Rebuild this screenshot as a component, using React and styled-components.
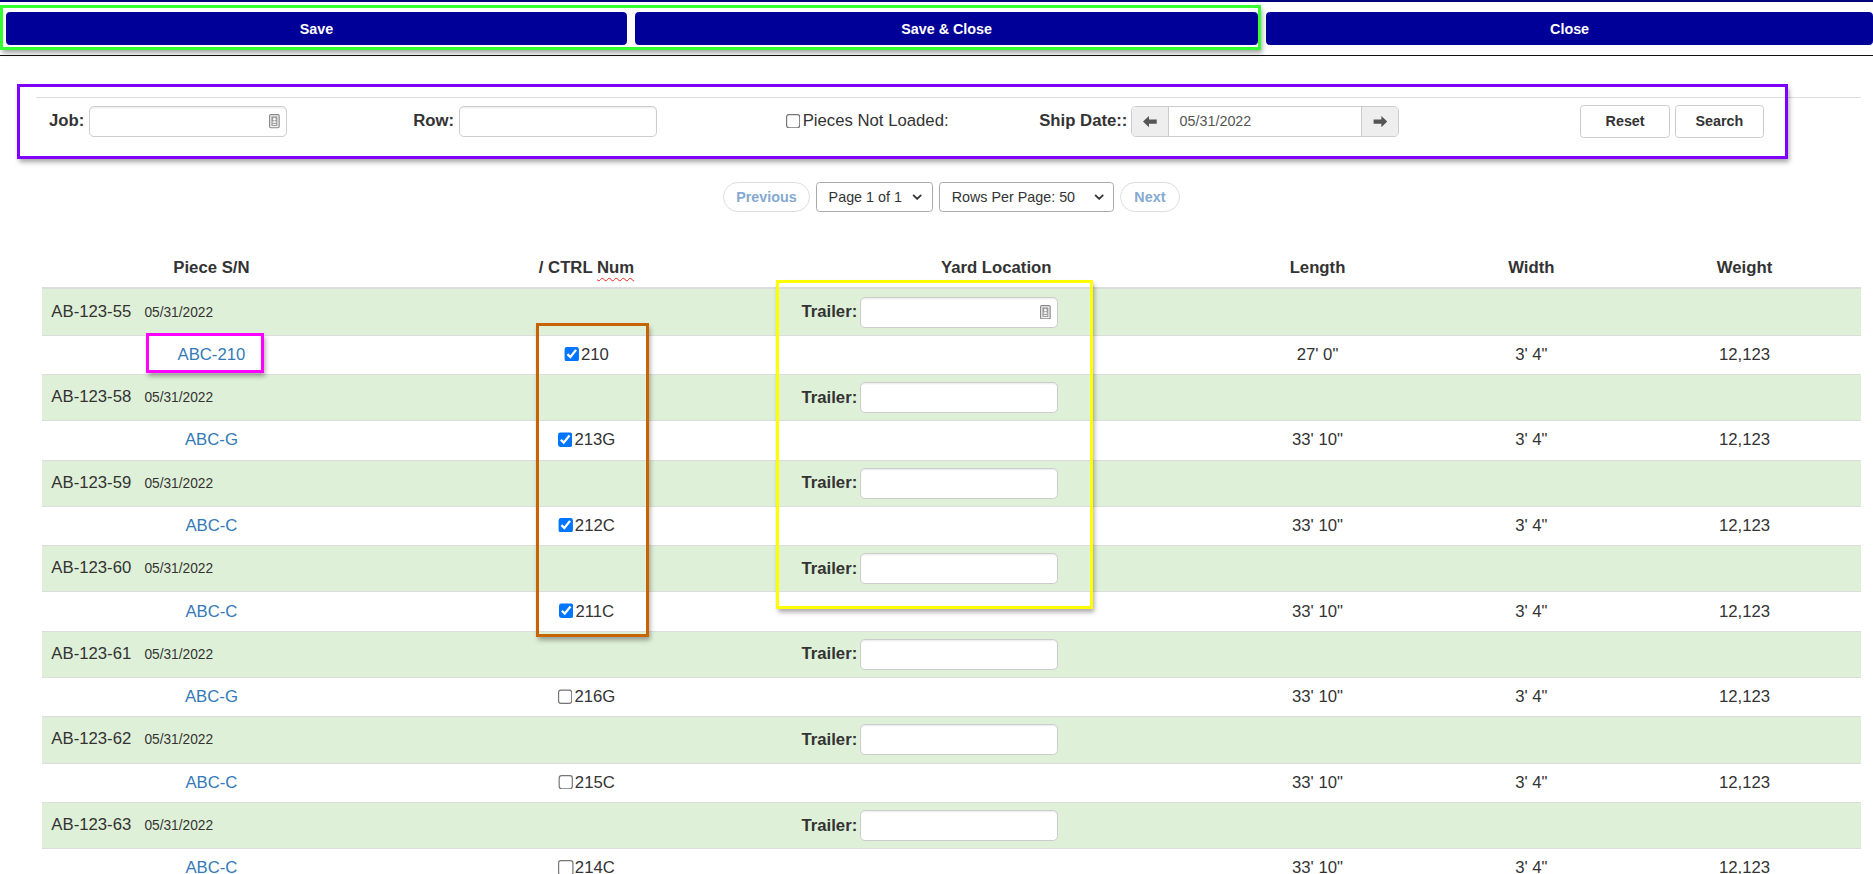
import React from 'react';
import styled, { createGlobalStyle } from 'styled-components';
import { ChevronDown } from 'lucide-react';

const GlobalStyle = createGlobalStyle`
  html, body {
    margin: 0;
    padding: 0;
    overflow: hidden;
    background: #fff;
  }
  body {
    font-family: "Liberation Sans", Arial, Helvetica, sans-serif;
    font-size: 14px;
    color: #333;
  }
  * {
    box-sizing: border-box;
  }
`;

const rows = [
  { job: 'AB-123-55', piece: 'ABC-210', ctrl: '210', checked: true, length: `27' 0"`, autofill: true },
  { job: 'AB-123-58', piece: 'ABC-G', ctrl: '213G', checked: true, length: `33' 10"` },
  { job: 'AB-123-59', piece: 'ABC-C', ctrl: '212C', checked: true, length: `33' 10"` },
  { job: 'AB-123-60', piece: 'ABC-C', ctrl: '211C', checked: true, length: `33' 10"` },
  { job: 'AB-123-61', piece: 'ABC-G', ctrl: '216G', checked: false, length: `33' 10"` },
  { job: 'AB-123-62', piece: 'ABC-C', ctrl: '215C', checked: false, length: `33' 10"` },
  { job: 'AB-123-63', piece: 'ABC-C', ctrl: '214C', checked: false, length: `33' 10"` },
];

// the screenshot was taken at 1568px wide, scale it up to the window
const Page = styled.div`
  position: relative;
  width: 1568px;
  height: 732px;
  overflow: hidden;
  zoom: 1.194515;
`;

const TopStrip = styled.div`
  height: 2px;
  background: #00007a;
`;

const ActionBar = styled.div`
  display: grid;
  grid-template-columns: 520px 521px 1fr;
  gap: 7px;
  padding: 8px 0 0 5px;
`;

const ActionButton = styled.button`
  height: 28px;
  border: 1px solid #000099;
  border-radius: 3px;
  background: #000099;
  color: #fff;
  font-family: inherit;
  font-size: 12px;
  font-weight: 700;
  cursor: pointer;
`;

const Rule = styled.div`
  margin-top: 8px;
  border-top: 1px solid #111;
`;

const FilterPanel = styled.div`
  margin: 34px 10px 0 30px;
  border-top: 1px solid #ddd;
`;

const FilterRow = styled.div`
  display: grid;
  grid-template-columns: 305px 312px 212px 453px auto;
  align-items: center;
  padding: 6px 0 0 11px;
`;

const Field = styled.div`
  display: flex;
  align-items: center;
  gap: ${(p) => p.$gap ?? 4}px;
`;

const Label = styled.label`
  font-weight: 700;
  font-size: 14px;
  color: #333;
  white-space: nowrap;
`;

const PlainLabel = styled.label`
  font-size: 14px;
  color: #333;
  white-space: nowrap;
`;

const InputWrap = styled.div`
  position: relative;
  width: ${(p) => p.$w || 166}px;
  height: 26px;
`;

const TextInput = styled.input`
  width: 100%;
  height: 100%;
  padding: 0 8px;
  border: 1px solid #ccc;
  border-radius: 4px;
  background: #fff;
  box-shadow: inset 0 1px 1px rgba(0, 0, 0, 0.075);
  font-family: inherit;
  font-size: 12px;
  color: #555;
  outline: none;
`;

const AutofillBadge = styled.span`
  position: absolute;
  right: 6px;
  top: 7px;
  display: flex;
  pointer-events: none;
`;

const Checkbox = styled.input.attrs({ type: 'checkbox' })`
  width: 13px;
  height: 13px;
  margin: 0 ${(p) => p.$space ?? 3}px 0 0;
  vertical-align: -2px;
  accent-color: #0075ff;
`;

const DateGroup = styled.div`
  display: flex;
  width: 224px;
  height: 26px;
  border: 1px solid #ccc;
  border-radius: 4px;
  overflow: hidden;
`;

const Addon = styled.span`
  display: flex;
  align-items: center;
  justify-content: center;
  width: 30px;
  background: #eee;
`;

const DateText = styled.span`
  flex: 1;
  display: flex;
  align-items: center;
  padding-left: 9px;
  border-left: 1px solid #ccc;
  border-right: 1px solid #ccc;
  background: #fff;
  font-size: 12px;
  color: #555;
`;

const ButtonGroup = styled.div`
  display: flex;
  gap: 4px;
`;

const PlainButton = styled.button`
  width: 75px;
  height: 28px;
  border: 1px solid #ccc;
  border-radius: 3px;
  background: #fff;
  color: #333;
  font-family: inherit;
  font-size: 12px;
  font-weight: 700;
`;

const Pager = styled.div`
  display: flex;
  justify-content: center;
  align-items: center;
  gap: 5px;
  margin-top: 37px;
  padding: 0 10px 0 35px;
`;

const PagerLink = styled.span`
  display: inline-flex;
  align-items: center;
  height: 25px;
  padding: 0 ${(p) => p.$pad || 10}px;
  border: 1px solid #ddd;
  border-radius: 13px;
  color: #86a9d0;
  font-size: 12px;
  font-weight: 700;
`;

const SelectBox = styled.div`
  display: flex;
  align-items: center;
  justify-content: space-between;
  width: ${(p) => p.$w}px;
  height: 25px;
  padding: 0 6px 0 10px;
  border: 1px solid #aaa;
  border-radius: 3px;
  font-size: 12px;
  color: #333;
`;

const Table = styled.table`
  width: 1523px;
  margin: 29px 0 0 35px;
  border-collapse: collapse;
  table-layout: fixed;
`;

const Th = styled.th`
  padding: 8px 8px 6px;
  line-height: 20px;
  font-size: 14px;
  font-weight: 700;
  text-align: center;
  color: #333;
  border-bottom: 2px solid #ddd;
`;

const Spelling = styled.span`
  text-decoration: underline wavy #e22;
  text-decoration-thickness: 1px;
  text-underline-offset: 3px;
`;

const Row = styled.tr`
  background: ${(p) => (p.$group ? '#dff0d8' : '#fff')};
`;

const Td = styled.td`
  padding: 6px 8px;
  line-height: 20px;
  border-top: 1px solid #ddd;
  text-align: ${(p) => p.$align || 'center'};
  vertical-align: middle;
  font-size: 14px;
  color: #333;
  white-space: nowrap;
`;

const ShipDate = styled.small`
  margin-left: 11px;
  font-size: 11.5px;
`;

const PieceLink = styled.a`
  color: #337ab7;
  text-decoration: none;
`;

const Callout = styled.div`
  position: absolute;
  left: ${(p) => p.$x}px;
  top: ${(p) => p.$y}px;
  width: ${(p) => p.$w}px;
  height: ${(p) => p.$h}px;
  border: 3px solid ${(p) => p.$color};
  box-shadow: 2px 3px 4px rgba(0, 0, 0, 0.35);
  pointer-events: none;
`;

const ContactIcon = () => (
  <svg width="9" height="12" viewBox="0 0 9 12">
    <rect x="0.5" y="0.5" width="8" height="11" rx="1" fill="#f4f4f4" stroke="#8a8a8a" />
    <rect x="2" y="2" width="5" height="8" fill="#9a9a9a" />
    <circle cx="4.5" cy="4.3" r="1.1" fill="#fff" />
    <path d="M2.8 7.4c0-1 0.8-1.6 1.7-1.6s1.7 0.6 1.7 1.6z" fill="#fff" />
    <rect x="3" y="8.3" width="3" height="0.8" fill="#fff" />
  </svg>
);

const Arrow = ({ dir }) => (
  <svg width="12" height="11" viewBox="0 0 12 11">
    <path
      d="M0 5.5L5 0.8V3.7H11.5V7.3H5V10.2Z"
      fill="#555"
      transform={dir === 'right' ? 'matrix(-1 0 0 1 12 0)' : undefined}
    />
  </svg>
);

const App = () => {
  return (
    <>
      <GlobalStyle />
      <Page>
        <TopStrip />
        <ActionBar>
          <ActionButton>Save</ActionButton>
          <ActionButton>Save &amp; Close</ActionButton>
          <ActionButton>Close</ActionButton>
        </ActionBar>
        <Rule />

        <FilterPanel>
          <FilterRow>
            <Field>
              <Label>Job:</Label>
              <InputWrap>
                <TextInput />
                <AutofillBadge><ContactIcon /></AutofillBadge>
              </InputWrap>
            </Field>
            <Field>
              <Label>Row:</Label>
              <InputWrap>
                <TextInput />
              </InputWrap>
            </Field>
            <Field $gap={0}>
              <Checkbox $space={1} />
              <PlainLabel>Pieces Not Loaded:</PlainLabel>
            </Field>
            <Field $gap={3}>
              <Label>Ship Date::</Label>
              <DateGroup>
                <Addon><Arrow dir="left" /></Addon>
                <DateText>05/31/2022</DateText>
                <Addon><Arrow dir="right" /></Addon>
              </DateGroup>
            </Field>
            <ButtonGroup>
              <PlainButton>Reset</PlainButton>
              <PlainButton>Search</PlainButton>
            </ButtonGroup>
          </FilterRow>
        </FilterPanel>

        <Pager>
          <PagerLink>Previous</PagerLink>
          <SelectBox $w={98}>
            Page 1 of 1
            <ChevronDown size={12} strokeWidth={3} color="#333" />
          </SelectBox>
          <SelectBox $w={147}>
            Rows Per Page: 50
            <ChevronDown size={12} strokeWidth={3} color="#333" />
          </SelectBox>
          <PagerLink $pad={11}>Next</PagerLink>
        </Pager>

        <Table>
          <colgroup>
            <col style={{ width: 284 }} />
            <col style={{ width: 344 }} />
            <col style={{ width: 342 }} />
            <col style={{ width: 196 }} />
            <col style={{ width: 162 }} />
            <col style={{ width: 195 }} />
          </colgroup>
          <thead>
            <tr>
              <Th>Piece S/N</Th>
              <Th>/ CTRL <Spelling>Num</Spelling></Th>
              <Th>Yard Location</Th>
              <Th>Length</Th>
              <Th>Width</Th>
              <Th>Weight</Th>
            </tr>
          </thead>
          <tbody>
            {rows.map((item) => (
              <React.Fragment key={item.job}>
                <Row $group>
                  <Td $align="left">
                    {item.job}
                    <ShipDate>05/31/2022</ShipDate>
                  </Td>
                  <Td />
                  <Td $align="left">
                    <Field $gap={2}>
                      <Label>Trailer:</Label>
                      <InputWrap>
                        <TextInput />
                        {item.autofill && <AutofillBadge><ContactIcon /></AutofillBadge>}
                      </InputWrap>
                    </Field>
                  </Td>
                  <Td />
                  <Td />
                  <Td />
                </Row>
                <Row>
                  <Td><PieceLink href="#">{item.piece}</PieceLink></Td>
                  <Td>
                    <Checkbox defaultChecked={item.checked} $space={1} />
                    {item.ctrl}
                  </Td>
                  <Td />
                  <Td>{item.length}</Td>
                  <Td>3' 4"</Td>
                  <Td>12,123</Td>
                </Row>
              </React.Fragment>
            ))}
          </tbody>
        </Table>

        <Callout $x={0} $y={4} $w={1056} $h={38} $color="#33ff33" />
        <Callout $x={14} $y={70} $w={1483} $h={63} $color="#8000ff" />
        <Callout $x={122} $y={279} $w={99} $h={33} $color="#ff00ff" />
        <Callout $x={449} $y={270} $w={94} $h={263} $color="#c86400" />
        <Callout $x={650} $y={234} $w={265} $h={276} $color="#ffff00" />
      </Page>
    </>
  );
};

export default App;
